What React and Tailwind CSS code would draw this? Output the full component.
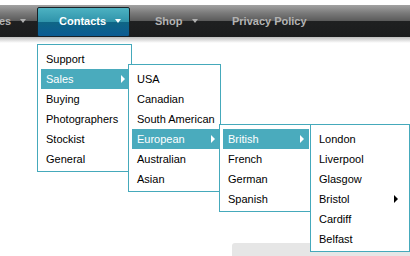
import React from "react";

const RightArrow = ({ color = "white", mr = "mr-[5px]" }) => (
  <span
    className={`ml-auto ${mr} w-0 h-0 border-y-[4px] border-y-transparent border-l-[4px] ${
      color === "white" ? "border-l-white" : "border-l-black"
    }`}
  />
);

function Item({ label, active, arrow, arrowColor, arrowMr }) {
  return (
    <div
      className={`h-[20px] flex items-center pl-[5px] ${
        active ? "bg-[#4aabbd] text-white" : "text-black"
      }`}
    >
      <span>{label}</span>
      {arrow && <RightArrow color={arrowColor} mr={arrowMr} />}
    </div>
  );
}

function Menu({ className, children }) {
  return (
    <div
      className={`absolute bg-white border border-[#45a9bb] pt-[4px] pb-[2px] pl-[3px] pr-[1px] ${className}`}
    >
      {children}
    </div>
  );
}

const Caret = ({ light }) => (
  <span
    className={`w-0 h-0 border-x-[3px] border-x-transparent border-t-[4px] ${
      light ? "border-t-white" : "border-t-[#b0b0b0]"
    }`}
  />
);

export default function App() {
  return (
    <div
      className="relative w-[410px] h-[256px] bg-white overflow-hidden text-[11px]"
      style={{ fontFamily: '"Liberation Sans", Arial, sans-serif' }}
    >
      <div className="h-[5px]" />
      <div className="h-[32px] flex bg-[linear-gradient(to_bottom,#a2a2a2_0%,#7a7a7a_25%,#5a5a5a_50%,#1f2021_50%,#1b1c1d_100%)] font-bold text-[#b3b3b3]">
        <div className="w-[37px] flex items-center">
          <span className="ml-[-1px]">es</span>
          <span className="ml-[9px] flex">
            <Caret />
          </span>
        </div>
        <div className="w-[93px] h-[30px] self-end flex items-center pb-[2px] border border-[#182228] rounded-[2px] bg-[linear-gradient(to_bottom,#4db2c2_0%,#2f93aa_50%,#0f6685_50%,#0b5b93_100%)] text-white">
          <span className="ml-[21px]">Contacts</span>
          <span className="ml-[9px] flex">
            <Caret light />
          </span>
        </div>
        <div className="w-[102px] flex items-center">
          <span className="ml-[25px]">Shop</span>
          <span className="ml-[9px] flex">
            <Caret />
          </span>
        </div>
        <div className="flex items-center">
          <span>Privacy Policy</span>
        </div>
      </div>
      <div className="h-[6px] bg-[linear-gradient(to_bottom,#bdbdbd,#ffffff)]" />

      <div className="absolute left-[232px] top-[243px] right-0 bottom-0 bg-[#e6e6e6] rounded-tl-[3px]" />

      <Menu className="left-[37px] top-[44px] w-[95px]">
        <Item label="Support" />
        <Item label="Sales" active arrow />
        <Item label="Buying" />
        <Item label="Photographers" />
        <Item label="Stockist" />
        <Item label="General" />
      </Menu>

      <Menu className="left-[128px] top-[64px] w-[93px]">
        <Item label="USA" />
        <Item label="Canadian" />
        <Item label="South American" />
        <Item label="European" active arrow arrowMr="mr-[4px]" />
        <Item label="Australian" />
        <Item label="Asian" />
      </Menu>

      <Menu className="left-[219px] top-[124px] w-[92px]">
        <Item label="British" active arrow arrowMr="mr-[5px]" />
        <Item label="French" />
        <Item label="German" />
        <Item label="Spanish" />
      </Menu>

      <Menu className="left-[310px] top-[124px] w-[100px]">
        <Item label="London" />
        <Item label="Liverpool" />
        <Item label="Glasgow" />
        <Item label="Bristol" arrow arrowColor="black" arrowMr="mr-[10px]" />
        <Item label="Cardiff" />
        <Item label="Belfast" />
      </Menu>
    </div>
  );
}
